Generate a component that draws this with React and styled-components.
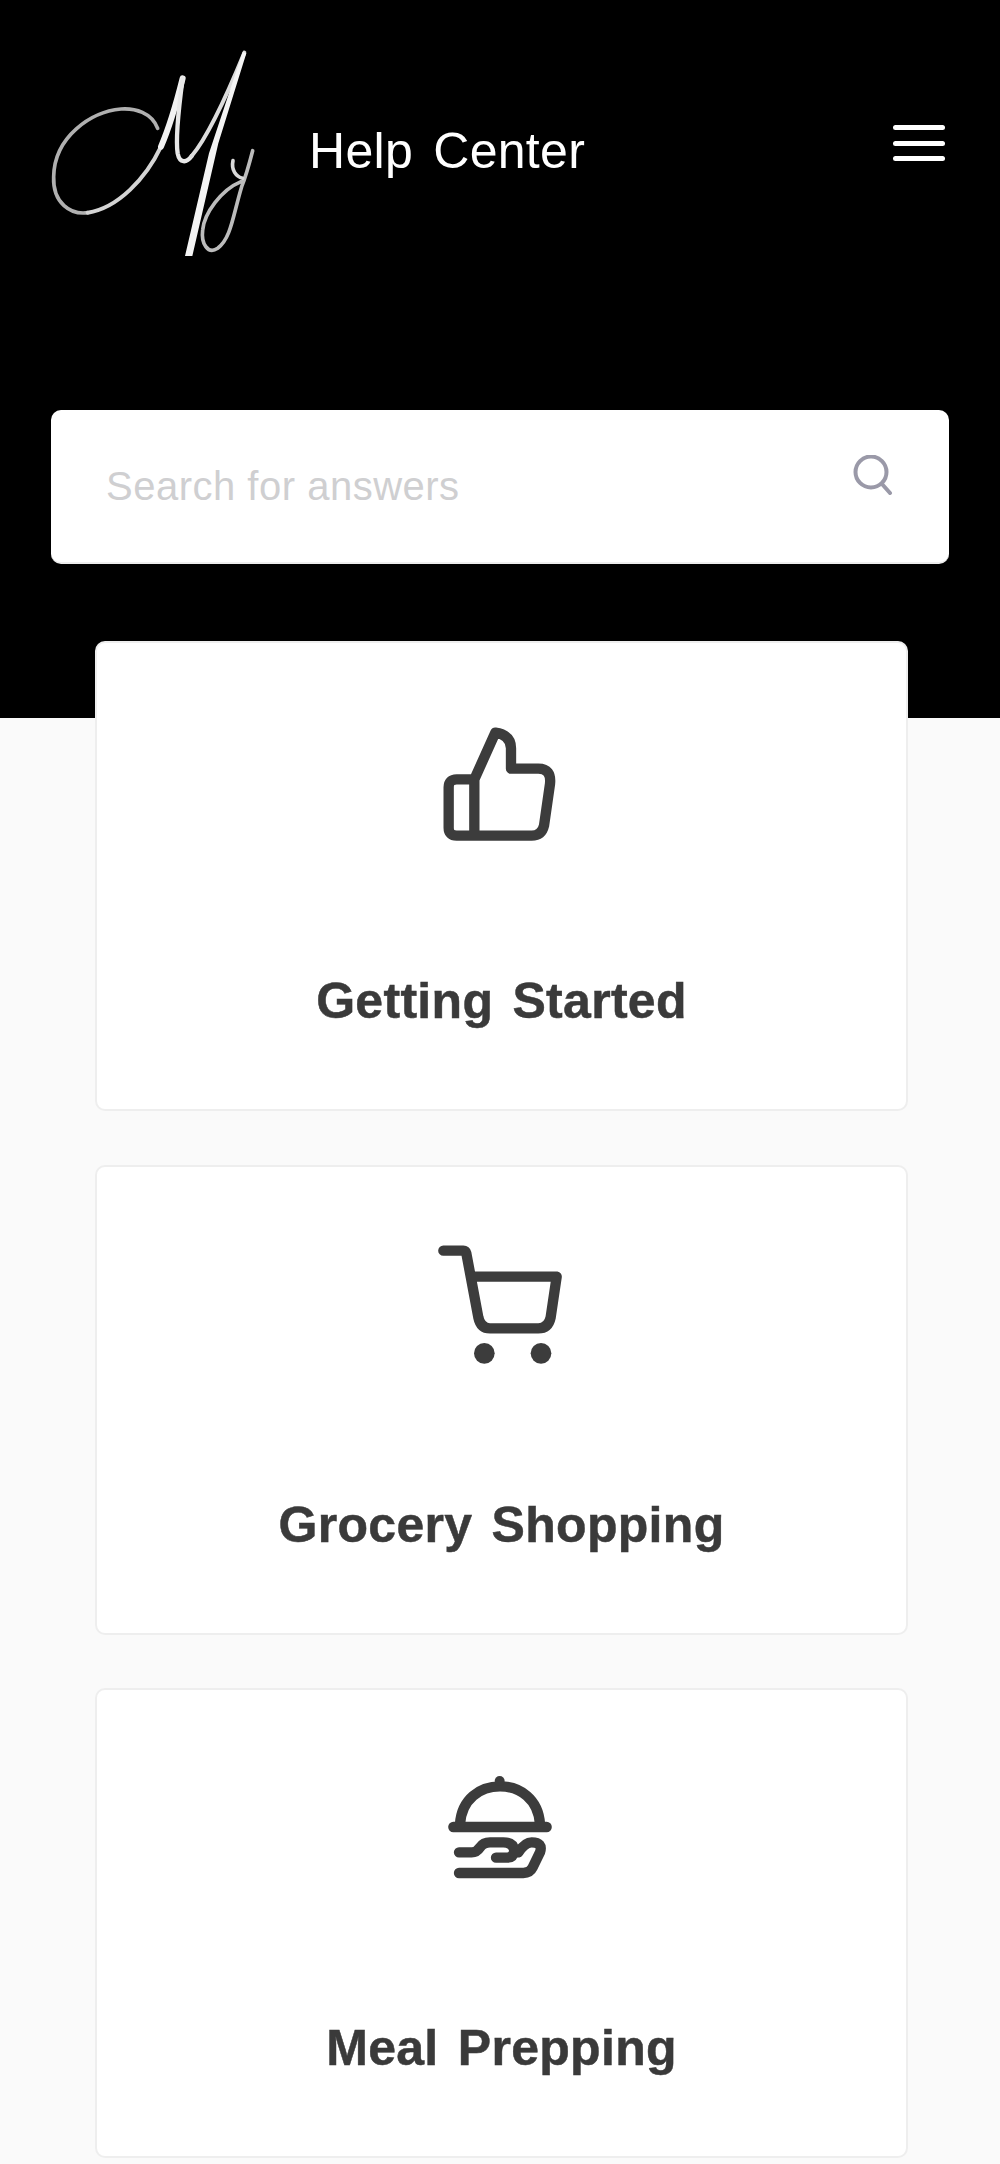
import styled, { createGlobalStyle } from 'styled-components';

const GlobalStyle = createGlobalStyle`
  * {
    box-sizing: border-box;
  }

  body {
    margin: 0;
    background: #fafafa;
    font-family: "Liberation Sans", Arial, sans-serif;
  }
`;

const Page = styled.div`
  min-height: 2164px;
  overflow: hidden;
`;

const Hero = styled.header`
  height: 718px;
  padding: 50px 51px 0;
  background: #000;
`;

const TopBar = styled.div`
  display: flex;
  align-items: flex-start;
  height: 360px;
`;

const Logo = styled.svg`
  flex: none;
  width: 204px;
  height: 207px;
  filter: blur(0.5px);
`;

const Title = styled.div`
  flex: 1;
  margin: 73px 0 0 54px;
  color: #fff;
  font-size: 50px;
  line-height: 56px;
  word-spacing: 6px;
  letter-spacing: 0.3px;
`;

const MenuButton = styled.button`
  display: flex;
  flex-direction: column;
  gap: 10.5px;
  width: 52px;
  margin: 75px 4px 0 0;
  padding: 0;
  border: 0;
  background: none;
`;

const MenuBar = styled.span`
  display: block;
  height: 5px;
  border-radius: 3px;
  background: #fff;
`;

const SearchBox = styled.div`
  display: flex;
  align-items: center;
  justify-content: space-between;
  height: 154px;
  padding: 0 56px 0 55px;
  border-bottom: 2px solid #eee;
  border-radius: 10px;
  background: #fff;
`;

const SearchInput = styled.input`
  flex: 1;
  min-width: 0;
  padding: 0;
  border: 0;
  outline: 0;
  background: none;
  color: #333;
  font-family: inherit;
  font-size: 40px;
  letter-spacing: 0.5px;

  &::placeholder {
    color: #cfcfd1;
    opacity: 1;
  }
`;

const SearchIcon = styled.svg`
  flex: none;
  width: 40px;
  height: 40px;
  margin-top: -22px;
`;

const CardList = styled.main`
  display: flex;
  flex-direction: column;
  gap: 53.5px;
  width: 813px;
  margin: -77px 0 0 95px;
`;

const Card = styled.a`
  display: flex;
  flex-direction: column;
  align-items: center;
  height: 470px;
  padding-top: 63px;
  border: 2px solid #eee;
  border-radius: 10px;
  background: #fff;
  color: #3a3a3a;
  text-decoration: none;
`;

const CardIcon = styled.svg`
  flex: none;
  width: 160px;
  height: 150px;
  margin-left: -3px;
  fill: none;
  stroke: #3c3c3c;
  stroke-width: 31;
  stroke-linecap: round;
  stroke-linejoin: round;
`;

const CardTitle = styled.h2`
  margin: 117px 0 0;
  font-size: 50px;
  line-height: 56px;
  font-weight: 700;
  word-spacing: 5px;
  letter-spacing: 0.3px;
  -webkit-text-stroke: 0.5px #3a3a3a;
`;

const MyLogo = () => (
  <Logo viewBox="60 60 612 621" fill="none" strokeLinecap="round" aria-label="My logo">
    <path d="M380 295C362 248 312 234 270 237C180 245 70 320 68 440C65 520 120 555 170 548" stroke="#b0b0b0" strokeWidth="11" />
    <path d="M170 548C260 535 345 445 390 350" stroke="#d4d4d4" strokeWidth="12" />
    <path d="M390 350C418 285 440 205 455 145" stroke="#f2f2f2" strokeWidth="18" />
    <path d="M455 145C445 220 432 320 440 370C446 400 466 400 482 378" stroke="#e8e8e8" strokeWidth="13" />
    <path d="M482 378C535 315 590 190 640 68" stroke="#dcdcdc" strokeWidth="12" />
    <path d="M635 66L646 70L562 340L484 678L462 678L534 370Z" fill="#f4f4f4" />
    <path d="M665 362C650 420 640 450 632 470C605 560 600 625 560 655C530 675 510 640 515 600C520 550 570 480 630 455" stroke="#bcbcbc" strokeWidth="11" />
    <path d="M606 392C600 420 615 440 635 445" stroke="#d8d8d8" strokeWidth="11" />
  </Logo>
);

const ThumbIcon = () => (
  <CardIcon viewBox="0 -12 480 450">
    <path d="M163 208H110Q86 208 86 232V353Q86 377 110 377H335Q365 377 372 347L390 222Q395 176 355 176H273V115Q273 75 226 68L163 208V377" />
  </CardIcon>
);

const CartIcon = () => (
  <CardIcon viewBox="0 0 480 450">
    <path d="M70 62H130Q137 62 139 70L175 262Q182 295 210 295H355Q385 295 392 262L410 140H155" />
    <circle cx="193" cy="370" r="31" fill="#3c3c3c" stroke="none" />
    <circle cx="363" cy="370" r="31" fill="#3c3c3c" stroke="none" />
  </CardIcon>
);

const MealIcon = () => (
  <CardIcon viewBox="0 -18 480 450">
    <path d="M100 204H380" />
    <path d="M120 195C125 120 180 82 240 82C300 82 355 120 360 195" />
    <circle cx="239" cy="66" r="15" fill="#3c3c3c" stroke="none" />
    <path d="M117 342H310Q330 342 338 325L360 280Q370 250 335 250Q315 250 295 280" />
    <path d="M117 280H155Q170 280 180 265Q190 250 210 250H250Q280 250 283 275Q280 296 262 296H228" />
  </CardIcon>
);

const categories = [
  { title: 'Getting Started', Icon: ThumbIcon },
  { title: 'Grocery Shopping', Icon: CartIcon },
  { title: 'Meal Prepping', Icon: MealIcon },
];

const App = () => (
  <Page>
    <GlobalStyle />
    <Hero>
      <TopBar>
        <MyLogo />
        <Title>Help Center</Title>
        <MenuButton aria-label="Menu">
          <MenuBar />
          <MenuBar />
          <MenuBar />
        </MenuButton>
      </TopBar>
      <SearchBox>
        <SearchInput placeholder="Search for answers" />
        <SearchIcon viewBox="0 0 40 40" fill="none" stroke="#9a99a8" strokeLinecap="round">
          <circle cx="18" cy="17" r="15.5" strokeWidth="4" />
          <path d="M29 29L37 38" strokeWidth="4" />
        </SearchIcon>
      </SearchBox>
    </Hero>
    <CardList>
      {categories.map(({ title, Icon }) => (
        <Card key={title} href="#">
          <Icon />
          <CardTitle>{title}</CardTitle>
        </Card>
      ))}
    </CardList>
  </Page>
);

export default App;
